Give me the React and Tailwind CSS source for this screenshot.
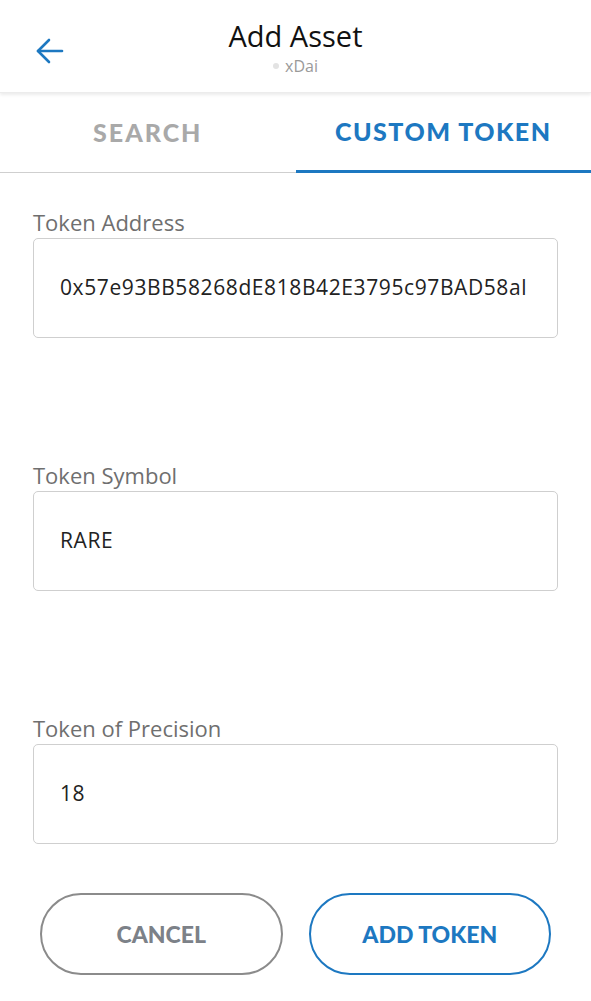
// Add Asset — pestaña de token personalizado
const LATO = { fontFamily: '"Lato", "Noto Sans", sans-serif' };
const OPEN = { fontFamily: '"Open Sans", "Noto Sans", sans-serif' };

function Field({ label, value, className = '' }) {
  return (
    <div className={className}>
      <p className="text-[22px] leading-[28px] text-[#6f6f6f]" style={OPEN}>{label}</p>
      <div className="mt-[2px] h-[100px] rounded-[5px] border border-[#cfcfcf] bg-white flex items-center pl-[26px] pr-[14px] overflow-hidden">
        <span className="text-[21px] tracking-[0.6px] text-[#222] whitespace-nowrap" style={OPEN}>{value}</span>
      </div>
    </div>
  );
}

export default function App() {
  return (
    <div className="w-[591px] h-[1001px] bg-white overflow-hidden" style={LATO}>
      {/* Cabecera */}
      <div className="relative h-[93px] bg-white shadow-[0_2px_3px_rgba(0,0,0,0.08)] border-b border-[#ececec] flex flex-col items-center pt-[18px]">
        <button type="button" className="absolute left-[35px] top-[37px] text-[#1d78c1]">
          <svg width="30" height="28" viewBox="0 0 30 28" fill="none" stroke="currentColor" strokeWidth="2.6" strokeLinecap="round" strokeLinejoin="round">
            <path d="M27 14H3" />
            <path d="M14 3L3 14l11 11" />
          </svg>
        </button>
        <h1 className="text-[29px] leading-[36px] text-[#111]" style={OPEN}>Add Asset</h1>
        <div className="flex items-center gap-[6px] mt-[2px]">
          <span className="w-[6px] h-[6px] rounded-full bg-[#e3e3e3]" />
          <span className="text-[16px] leading-[20px] text-[#9a9a9a]" style={OPEN}>xDai</span>
        </div>
      </div>

      {/* Pestañas */}
      <div className="flex h-[80px] border-b border-[#cfcfcf]">
        <div className="flex-1 flex items-center justify-center">
          <span className="text-[25px] font-black tracking-[2px] text-[#a9a9a9]">SEARCH</span>
        </div>
        <div className="flex-1 flex items-center justify-center border-b-[3px] border-[#1d78c1] -mb-px">
          <span className="text-[25px] font-black tracking-[1.5px] text-[#1d78c1]">CUSTOM TOKEN</span>
        </div>
      </div>

      {/* Formulario */}
      <div className="px-[33px] pt-[35px]">
        <Field label="Token Address" value="0x57e93BB58268dE818B42E3795c97BAD58al" />
        <Field label="Token Symbol" value="RARE" className="mt-[123px]" />
        <Field label="Token of Precision" value="18" className="mt-[123px]" />
      </div>

      {/* Botones */}
      <div className="flex gap-[26px] px-[40px] mt-[49px]">
        <button type="button" className="flex-1 h-[82px] rounded-full border-2 border-[#8b8b8b] text-[23px] font-black text-[#7c8188]">
          CANCEL
        </button>
        <button type="button" className="flex-1 h-[82px] rounded-full border-2 border-[#1d78c1] text-[23px] font-black text-[#1d78c1]">
          ADD TOKEN
        </button>
      </div>
    </div>
  );
}
